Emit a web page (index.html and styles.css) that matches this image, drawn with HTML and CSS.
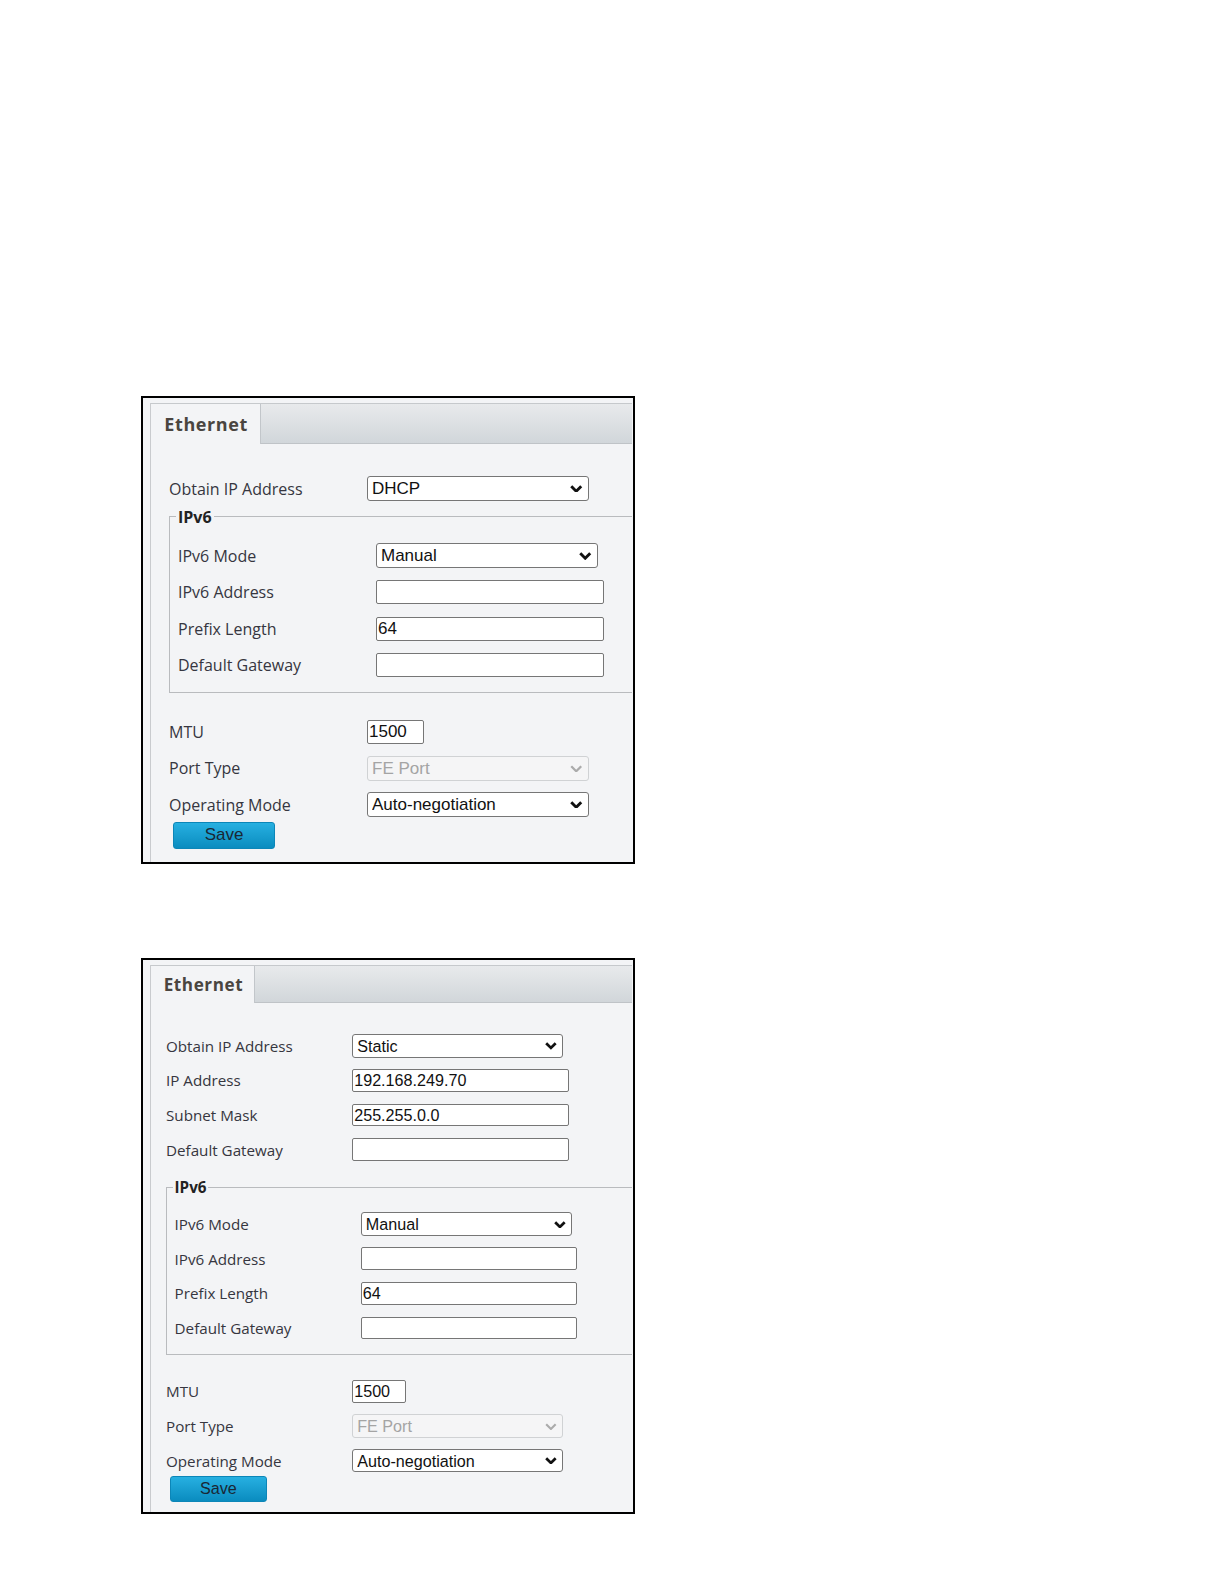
FILE: index.html
```html
<!DOCTYPE html>
<html lang="en">
<head>
    <meta charset="utf-8">
    <title>Ethernet</title>
    <link rel="stylesheet" href="styles.css">
</head>
<body>
    <div class="page">

        <!-- DHCP -->
        <div class="shot">
            <div class="tabs">
                <div class="tab-bar"><div class="tab">Ethernet</div></div>
                <div class="tab-body">
                    <div class="row">
                        <span class="lbl">Obtain IP Address</span>
                        <span class="sel"><select class="ctl"><option>DHCP</option></select><svg class="caret" viewBox="0 0 10 6"><path d="M1 1L5 5L9 1"/></svg></span>
                    </div>
                    <fieldset class="ipv6">
                        <legend>IPv6</legend>
                        <div class="row">
                            <span class="lbl">IPv6 Mode</span>
                            <span class="sel"><select class="ctl"><option>Manual</option></select><svg class="caret" viewBox="0 0 10 6"><path d="M1 1L5 5L9 1"/></svg></span>
                        </div>
                        <div class="row">
                            <span class="lbl">IPv6 Address</span>
                            <input class="ctl txt" type="text" value="">
                        </div>
                        <div class="row">
                            <span class="lbl">Prefix Length</span>
                            <input class="ctl txt" type="text" value="64">
                        </div>
                        <div class="row">
                            <span class="lbl">Default Gateway</span>
                            <input class="ctl txt" type="text" value="">
                        </div>
                    </fieldset>
                    <div class="row after">
                        <span class="lbl">MTU</span>
                        <input class="ctl txt short" type="text" value="1500">
                    </div>
                    <div class="row">
                        <span class="lbl">Port Type</span>
                        <span class="sel off"><select class="ctl" disabled><option>FE Port</option></select><svg class="caret" viewBox="0 0 10 6"><path d="M1 1L5 5L9 1"/></svg></span>
                    </div>
                    <div class="row">
                        <span class="lbl">Operating Mode</span>
                        <span class="sel"><select class="ctl"><option>Auto-negotiation</option></select><svg class="caret" viewBox="0 0 10 6"><path d="M1 1L5 5L9 1"/></svg></span>
                    </div>
                    <button class="btn-save">Save</button>
                </div>
            </div>
        </div>

        <!-- Static -->
        <div class="shot shot-small">
            <div class="tabs">
                <div class="tab-bar"><div class="tab">Ethernet</div></div>
                <div class="tab-body">
                    <div class="row">
                        <span class="lbl">Obtain IP Address</span>
                        <span class="sel"><select class="ctl"><option>Static</option></select><svg class="caret" viewBox="0 0 10 6"><path d="M1 1L5 5L9 1"/></svg></span>
                    </div>
                    <div class="row">
                        <span class="lbl">IP Address</span>
                        <input class="ctl txt" type="text" value="192.168.249.70">
                    </div>
                    <div class="row">
                        <span class="lbl">Subnet Mask</span>
                        <input class="ctl txt" type="text" value="255.255.0.0">
                    </div>
                    <div class="row">
                        <span class="lbl">Default Gateway</span>
                        <input class="ctl txt" type="text" value="">
                    </div>
                    <fieldset class="ipv6 spaced">
                        <legend>IPv6</legend>
                        <div class="row">
                            <span class="lbl">IPv6 Mode</span>
                            <span class="sel"><select class="ctl"><option>Manual</option></select><svg class="caret" viewBox="0 0 10 6"><path d="M1 1L5 5L9 1"/></svg></span>
                        </div>
                        <div class="row">
                            <span class="lbl">IPv6 Address</span>
                            <input class="ctl txt" type="text" value="">
                        </div>
                        <div class="row">
                            <span class="lbl">Prefix Length</span>
                            <input class="ctl txt" type="text" value="64">
                        </div>
                        <div class="row">
                            <span class="lbl">Default Gateway</span>
                            <input class="ctl txt" type="text" value="">
                        </div>
                    </fieldset>
                    <div class="row after">
                        <span class="lbl">MTU</span>
                        <input class="ctl txt short" type="text" value="1500">
                    </div>
                    <div class="row">
                        <span class="lbl">Port Type</span>
                        <span class="sel off"><select class="ctl" disabled><option>FE Port</option></select><svg class="caret" viewBox="0 0 10 6"><path d="M1 1L5 5L9 1"/></svg></span>
                    </div>
                    <div class="row">
                        <span class="lbl">Operating Mode</span>
                        <span class="sel"><select class="ctl"><option>Auto-negotiation</option></select><svg class="caret" viewBox="0 0 10 6"><path d="M1 1L5 5L9 1"/></svg></span>
                    </div>
                    <button class="btn-save">Save</button>
                </div>
            </div>
        </div>

    </div>
</body>
</html>
```

FILE: styles.css
```css
* { box-sizing: border-box; }
body {
    margin: 0;
    background: #fff;
    font-family: 'Open Sans', 'Noto Sans', sans-serif;
}
.page {
    padding: 396px 0 40px 141px;
}

/* one screenshot of the settings page */
.shot {
    width: 494px;
    border: 2px solid #000;
    background: #f3f4f6;
    padding: 5px 1px 0 7px;
    font-size: 16px;
    overflow: hidden;
    margin-bottom: 94px;
}
.shot-small {
    font-size: 15.2px;
    padding-top: 5px;
}
.tabs {
    border-left: 1px solid #c9cbce;
}
.tab-bar {
    display: flex;
    height: 2.5625em;
    border-top: 1px solid #c6c9cc;
    border-bottom: 1px solid #bfc3c7;
    background: linear-gradient(#e8eaec, #d1d6da);
}
.tab {
    width: 6.11em;
    margin-bottom: -1px;
    padding-left: .74em;
    background: #f3f4f6;
    border-right: 1px solid #c2c6ca;
    display: flex;
    align-items: center;
    font-weight: bold;
    font-size: 1.125em;
    letter-spacing: .6px;
    color: #4a4540;
}
.tab-body {
    padding: calc(1.58em + 1px) 0 .8em 18px;
}
.shot-small .tab-body {
    padding-left: 15px;
    padding-bottom: 10px;
}

.row {
    display: flex;
    align-items: center;
    height: 2.28em;
}
.lbl {
    flex: none;
    width: 12.375em;
    color: #363640;
}
.shot-small .lbl {
    width: 12.25em;
}
.after {
    margin-top: 1.25em;
}

/* form controls */
.ctl {
    margin: 0;
    font-family: 'Liberation Sans', Arial, sans-serif;
    font-size: 1.0625em;
    width: 13.06em;
    height: 1.47em;
    color: #111;
    background: #fff;
    border: 1px solid #767676;
    border-radius: 3px;
    padding: 0 2px 0 4px;
}
select.ctl {
    appearance: none;
    -webkit-appearance: none;
}
.txt {
    width: 13.41em;
    height: 1.41em;
    border-radius: 2px;
    padding: 0 1px;
}
.short {
    width: 3.35em;
}
select.ctl:disabled {
    color: #a4a4a4;
    background: #f5f5f6;
    border-color: #d0d2d4;
    opacity: 1;
}
.sel {
    position: relative;
    display: inline-flex;
}
.caret {
    position: absolute;
    right: .38em;
    top: 50%;
    width: .78em;
    height: .47em;
    margin-top: -.22em;
    pointer-events: none;
}
.caret path {
    fill: none;
    stroke: #111;
    stroke-width: 2.3;
}
.off .caret path {
    stroke: #ababab;
    stroke-width: 1.8;
}

fieldset.ipv6 {
    margin: 0;
    min-width: 0;
    padding: .67em 0 .5625em .5em;
    border: 1px solid #b9bbbe;
    border-right: none;
}
fieldset.spaced {
    margin-top: .7em;
}
.ipv6 legend {
    padding: 0 2px;
    margin-left: -2px;
    line-height: 1.25em;
    font-weight: bold;
    color: #222;
}

.btn-save {
    display: block;
    margin: -1px 0 0 4px;
    padding: 0;
    border: 1px solid #0c86b8;
    border-radius: 3px;
    background: linear-gradient(#27b0e1, #0a8cbf);
    color: #1a2734;
    font-family: 'Liberation Sans', Arial, sans-serif;
    font-size: 1.0625em;
    width: 6em;
    height: 1.59em;
    cursor: pointer;
}
.shot-small .btn-save {
    margin-top: -2px;
}
```
